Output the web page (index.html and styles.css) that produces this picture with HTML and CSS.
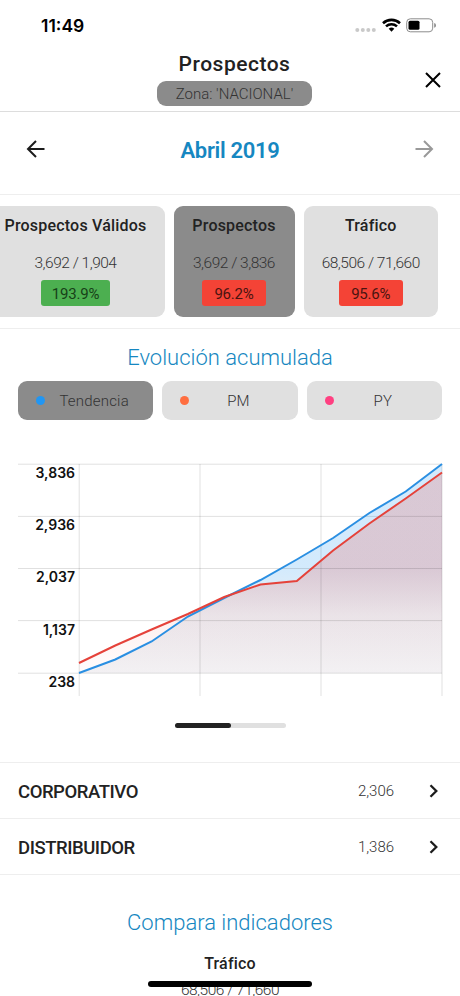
FILE: index.html
```
<!DOCTYPE html>
<html lang="es">
<head>
    <meta charset="UTF-8">
    <meta name="viewport" content="width=device-width, initial-scale=1.0">
    <title>Prospectos</title>
    <link rel="stylesheet" href="styles.css">
</head>
<body>
    <div class="status-bar">
        <span class="time">11:49</span>
        <svg class="status-icons" width="82" height="16" viewBox="0 0 82 16">
            <g fill="#c9c9c9">
                <circle cx="2.3" cy="12" r="2"/>
                <circle cx="7.8" cy="12" r="2"/>
                <circle cx="13.3" cy="12" r="2"/>
                <circle cx="18.8" cy="12" r="2"/>
            </g>
            <g fill="none" stroke="#000" stroke-width="2.6">
                <path d="M28 5.2a12.6 12.6 0 0 1 17 0"/>
                <path d="M31 8.4a8.2 8.2 0 0 1 11 0"/>
            </g>
            <path d="M33.7 10.7a4.4 4.4 0 0 1 5.6 0L36.5 13.7z"/>
            <rect x="51.7" y="0.8" width="26" height="13" rx="3.6" fill="none" stroke="#8c8c8c"/>
            <rect x="53.5" y="2.8" width="11" height="9" rx="1.5"/>
            <path d="M79.2 5v4.8a2.5 2.5 0 0 0 0-4.8z" fill="#8c8c8c"/>
        </svg>
    </div>

    <header>
        <h1>Prospectos</h1>
        <span class="zone">Zona: 'NACIONAL'</span>
        <svg class="close" width="16" height="16" viewBox="0 0 16 16"><path d="M1 1l14 14M15 1L1 15"/></svg>
    </header>

    <nav class="month">
        <svg class="arrow" width="20" height="20" viewBox="0 0 20 20"><path d="M18.5 10H2M10 2L2 10l8 8"/></svg>
        <h2>Abril 2019</h2>
        <svg class="arrow disabled" width="20" height="20" viewBox="0 0 20 20"><path d="M1.500 10H18M10 2l8 8-8 8"/></svg>
    </nav>

    <section class="cards">
        <div class="card card-first">
            <h3>Prospectos Válidos</h3>
            <p>3,692 / 1,904</p>
            <span class="badge green">193.9%</span>
        </div>
        <div class="card card-second active">
            <h3>Prospectos</h3>
            <p>3,692 / 3,836</p>
            <span class="badge">96.2%</span>
        </div>
        <div class="card card-third">
            <h3>Tráfico</h3>
            <p>68,506 / 71,660</p>
            <span class="badge">95.6%</span>
        </div>
    </section>

    <section class="evolution">
        <h2 class="section-title">Evolución acumulada</h2>
        <div class="tabs">
            <div class="tab active"><i class="dot blue"></i><span>Tendencia</span></div>
            <div class="tab"><i class="dot orange"></i><span>PM</span></div>
            <div class="tab"><i class="dot pink"></i><span>PY</span></div>
        </div>

        <svg class="chart" width="460" height="240" viewBox="0 460 460 240">
            <defs>
                <linearGradient id="blueFill" gradientUnits="userSpaceOnUse" x1="0" y1="568" x2="0" y2="673">
                    <stop offset="0" stop-color="#2196f3" stop-opacity="0.2"/>
                    <stop offset="0.45" stop-color="#3a80b8" stop-opacity="0.11"/>
                    <stop offset="1" stop-color="#505a80" stop-opacity="0.07"/>
                </linearGradient>
                <linearGradient id="redFill" gradientUnits="userSpaceOnUse" x1="0" y1="568" x2="0" y2="673">
                    <stop offset="0" stop-color="#f44336" stop-opacity="0.2"/>
                    <stop offset="0.45" stop-color="#f44336" stop-opacity="0.08"/>
                    <stop offset="1" stop-color="#f44336" stop-opacity="0.015"/>
                </linearGradient>
            </defs>
            <path class="area-blue" d="M79 673L115.3 659.5 151.6 641.5 187.9 616.5 224.2 598 260.5 580 296.8 559.5 333.1 538 369.4 513 405.7 491.5 442 464V673z"/>
            <path class="area-red" d="M79 663L115.3 645.5 151.6 629.5 187.9 614 224.2 597 260.5 584.5 296.8 581 333.1 550.5 369.4 523.5 405.7 498.5 442 472.5V673H79z"/>
            <path class="grid" d="M18 464.2H442M18 516.4H442M18 568.5H442M18 620.6H442M18 673.2H442"/>
            <path class="grid" d="M79.2 464V696M200 464V696M321 464V696M442 464V696"/>
            <path class="line-blue" d="M79 673L115.3 659.5 151.6 641.5 187.9 616.5 224.2 598 260.5 580 296.8 559.5 333.1 538 369.4 513 405.7 491.5 442 464"/>
            <path class="line-red" d="M79 663L115.3 645.5 151.6 629.5 187.9 614 224.2 597 260.5 584.5 296.8 581 333.1 550.5 369.4 523.5 405.7 498.5 442 472.5"/>
            <g class="labels">
                <text x="75" y="477.500">3,836</text>
                <text x="75" y="530">2,936</text>
                <text x="75" y="582">2,037</text>
                <text x="75" y="634.500">1,137</text>
                <text x="75" y="686.500">238</text>
            </g>
        </svg>
        <div class="pager"><div class="pager-on"></div></div>
    </section>

    <ul class="list">
        <li>
            <strong>CORPORATIVO</strong><span>2,306</span>
            <svg width="10" height="14" viewBox="0 0 10 14"><path d="M1.5 1.300L7.300 7l-5.800 5.700"/></svg>
        </li>
        <li>
            <strong>DISTRIBUIDOR</strong><span>1,386</span>
            <svg width="10" height="14" viewBox="0 0 10 14"><path d="M1.5 1.300L7.300 7l-5.800 5.700"/></svg>
        </li>
    </ul>

    <section class="compare">
        <h2 class="section-title">Compara indicadores</h2>
        <h3>Tráfico</h3>
        <p>68,506 / 71,660</p>
    </section>
    <div class="home-indicator"></div>
</body>
</html>
```
FILE: styles.css
```
* {
    box-sizing: border-box;
}

body {
    position: relative;
    height: 996px;
    margin: 0;
    overflow: hidden;
    background: #fff;
    color: #222;
    font-family: Roboto, "Liberation Sans", sans-serif;
}

h1, h2, h3, p, ul {
    margin: 0;
    padding: 0;
}

svg {
    display: block;
}

/* Status bar */
.status-bar {
    display: flex;
    justify-content: space-between;
    height: 51px;
    padding: 17px 23px 0 41px;
}

.time {
    color: #000;
    font: 600 17.5px/18px Inter, sans-serif;
}

.status-icons {
    margin-top: 1px;
}

/* Header */
header {
    position: relative;
    display: flex;
    flex-direction: column;
    align-items: center;
    height: 61px;
    padding-left: 9px;
    border-bottom: 1px solid #ddd;
}

h1 {
    font-size: 21px;
    line-height: 26px;
    font-weight: 500;
    letter-spacing: 0.5px;
}

.zone {
    width: 155px;
    height: 25px;
    margin-top: 4px;
    border-radius: 9px;
    background: #8b8b8b;
    color: #333;
    font-size: 15px;
    line-height: 27px;
    font-weight: 350;
    text-align: center;
}

.close {
    position: absolute;
    top: 21px;
    right: 19px;
    fill: none;
    stroke: #000;
    stroke-width: 2;
}

/* Month selector */
.month {
    display: flex;
    justify-content: space-between;
    align-items: center;
    height: 83px;
    padding: 0 26px 8px;
    border-bottom: 1px solid #eee;
}

.month h2 {
    padding-top: 3px;
    color: #1687c1;
    font-size: 22px;
    line-height: 28px;
    font-weight: 600;
    letter-spacing: -0.3px;
}

.arrow {
    fill: none;
    stroke: #1c1c1c;
    stroke-width: 2;
}

.arrow.disabled {
    stroke: #999;
}

/* Indicator cards */
.cards {
    display: flex;
    gap: 9px;
    height: 134px;
    margin-left: -13.5px;
    padding-top: 11px;
    border-bottom: 1px solid #eee;
}

.card {
    display: flex;
    flex: none;
    flex-direction: column;
    align-items: center;
    height: 111px;
    border-radius: 9px;
    background: #e0e0e0;
}

.card-first {
    width: 178px;
}

.card-second {
    width: 121px;
}

.card-third {
    width: 134.5px;
}

.card.active, .tab.active {
    background: #8b8b8b;
}

.card h3, .compare h3 {
    font-size: 16px;
    line-height: 20px;
    font-weight: 500;
    letter-spacing: 0.2px;
}

.card h3 {
    margin-top: 10px;
}

.card p, .compare p {
    color: #333;
    font-size: 15.5px;
    line-height: 20px;
    font-weight: 350;
    letter-spacing: -0.5px;
}

.card p {
    margin-top: 17px;
}

.badge {
    min-width: 64px;
    height: 26px;
    margin-top: 7px;
    padding: 0 11px;
    border-radius: 3px;
    background: #f44336;
    color: #4a1410;
    font-size: 15px;
    line-height: 28px;
    font-weight: 400;
    letter-spacing: -0.2px;
    text-align: center;
}

.badge.green {
    background: #4caf50;
    color: #174018;
}

/* Chart */
.evolution {
    height: 433px;
    padding-top: 15px;
}

.section-title {
    color: #1687c1;
    font-size: 22px;
    line-height: 28px;
    font-weight: 350;
    text-align: center;
}

.tabs {
    display: flex;
    gap: 9px;
    margin: 9px 18px 0;
}

.tab {
    display: flex;
    flex: 1;
    align-items: center;
    height: 39px;
    padding: 0 18px;
    border-radius: 9px;
    background: #e0e0e0;
    color: #333;
    font-size: 15px;
    font-weight: 350;
}

.tab span {
    flex: 1;
    padding-left: 8px;
    text-align: center;
    letter-spacing: 0.2px;
}

.dot {
    width: 9px;
    height: 9px;
    border-radius: 50%;
}

.blue {
    background: #2196f3;
}

.orange {
    background: #ff6e40;
}

.pink {
    background: #ff4081;
}

.chart {
    margin-top: 40px;
}

.area-blue {
    fill: url(#blueFill);
}

.area-red {
    fill: url(#redFill);
}

.grid {
    stroke: #000;
    stroke-opacity: 0.12;
}

.line-blue, .line-red {
    fill: none;
    stroke: #2a8fe2;
    stroke-width: 2;
}

.line-red {
    stroke: #e5423a;
}

.labels {
    fill: #111;
    font: 600 14px Inter, sans-serif;
    text-anchor: end;
}

.pager {
    width: 111px;
    height: 5px;
    margin: 23px auto 0;
    border-radius: 3px;
    background: #e0e0e0;
}

.pager-on {
    width: 56px;
    height: 5px;
    border-radius: 3px;
    background: #222;
}

/* Channel list */
.list {
    border-top: 1px solid #eee;
    list-style: none;
}

.list li {
    display: flex;
    align-items: center;
    height: 56px;
    padding: 1px 21px 0 18px;
    border-bottom: 1px solid #eee;
}

.list strong {
    flex: 1;
    padding-top: 2px;
    font-size: 18.5px;
    font-weight: 500;
    letter-spacing: -0.45px;
}

.list span {
    width: 40px;
    margin-right: 33px;
    color: #333;
    font-size: 15px;
    font-weight: 350;
    text-align: center;
}

.list svg {
    fill: none;
    stroke: #1c1c1c;
    stroke-width: 2.3;
}

/* Comparison */
.compare {
    padding-top: 34px;
    text-align: center;
}

.compare h3 {
    margin-top: 17px;
}

.compare p {
    margin-top: 6px;
}

.home-indicator {
    position: absolute;
    top: 981px;
    left: 148px;
    width: 164px;
    height: 6px;
    border-radius: 3px;
    background: #000;
}
```
